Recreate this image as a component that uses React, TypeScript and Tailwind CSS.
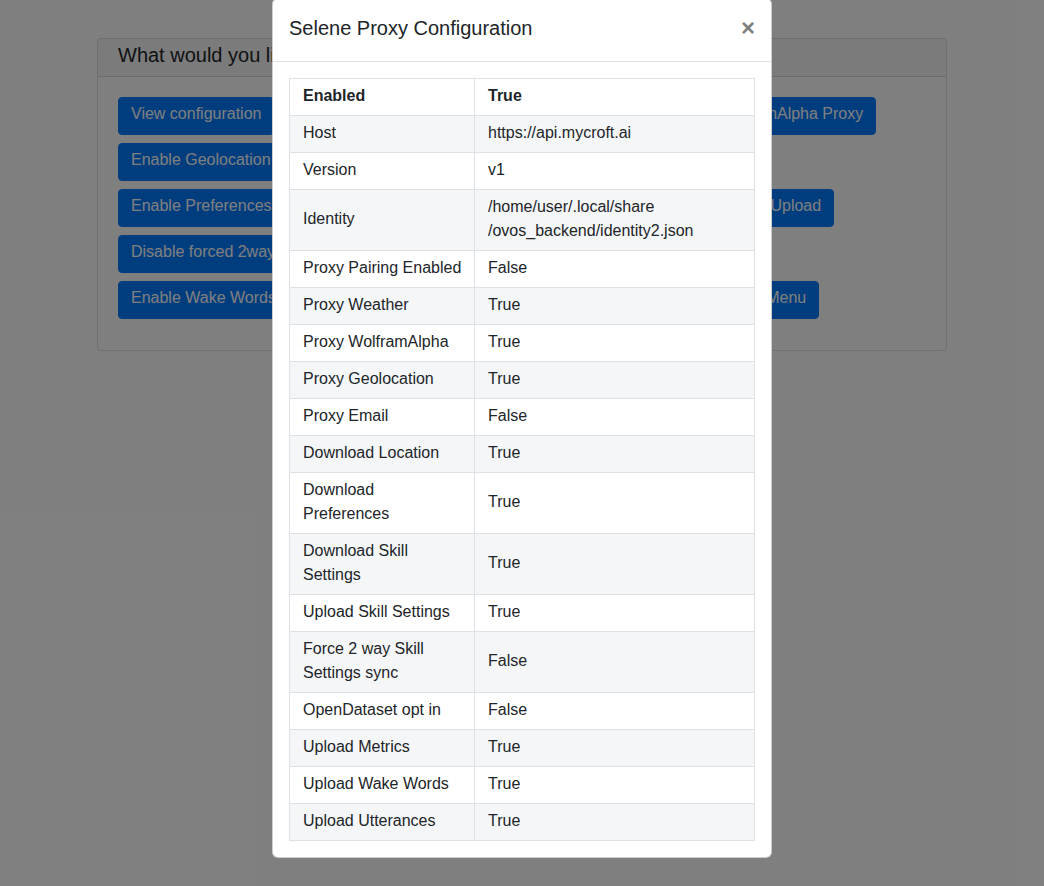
import React from "react";

const font = "[font-family:'Liberation_Sans',Arial,sans-serif]";

const btnClass =
  "h-[38px] shrink-0 whitespace-nowrap rounded border border-[#007bff] bg-[#007bff] px-3 pb-1 text-base leading-6 text-white";

const cellClass = "border border-[#dee2e6] pb-[7px] pl-[13px] pr-3 pt-[5px] align-middle leading-6";

interface ButtonRow {
  labels: string[];
  widths: (string | null)[];
}

const buttonRows: ButtonRow[] = [
  {
    labels: ["View configuration", "Enable Weather Proxy", "Enable WolframAlpha Proxy"],
    widths: [null, "w-[360px]", null],
  },
  {
    labels: ["Enable Geolocation Proxy", "Enable Email Proxy"],
    widths: [null, "w-[200px]"],
  },
  {
    labels: ["Enable Preferences Download", "Disable Location Download", "Enable Skill Settings Upload"],
    widths: [null, "w-[231px]", null],
  },
  {
    labels: ["Disable forced 2way Skill Settings sync", "Enable OpenDataset"],
    widths: [null, null],
  },
  {
    labels: ["Enable Wake Words Upload", "Enable Utterances Upload", "Main Menu"],
    widths: [null, "w-[354px]", null],
  },
];

const configRows: [string, React.ReactNode][] = [
  ["Host", "https://api.mycroft.ai"],
  ["Version", "v1"],
  [
    "Identity",
    <>
      /home/user/.local/share
      <wbr />
      /ovos_backend/identity2.json
    </>,
  ],
  ["Proxy Pairing Enabled", "False"],
  ["Proxy Weather", "True"],
  ["Proxy WolframAlpha", "True"],
  ["Proxy Geolocation", "True"],
  ["Proxy Email", "False"],
  ["Download Location", "True"],
  ["Download Preferences", "True"],
  ["Download Skill Settings", "True"],
  ["Upload Skill Settings", "True"],
  ["Force 2 way Skill Settings sync", "False"],
  ["OpenDataset opt in", "False"],
  ["Upload Metrics", "True"],
  ["Upload Wake Words", "True"],
  ["Upload Utterances", "True"],
];

function MenuCard() {
  return (
    <div className="mx-auto mt-[38px] w-[850px] rounded border border-black/[.125] bg-white">
      <div className="flex h-[38px] items-center border-b border-black/[.125] bg-black/[.03] px-5 pb-[6px] text-xl text-[#212529]">
        What would you like to do?
      </div>
      <div className="px-5 pb-[23px] pt-5">
        {buttonRows.map((row, i) => (
          <div key={i} className="mb-2 flex gap-2">
            {row.labels.map((label, j) => (
              <button key={label} type="button" className={`${btnClass} ${row.widths[j] ?? ""}`}>
                {label}
              </button>
            ))}
          </div>
        ))}
      </div>
    </div>
  );
}

function ConfigModal() {
  return (
    <div className="absolute left-1/2 top-[-2px] w-[500px] -translate-x-1/2 rounded-md border border-black/20 bg-white">
      <div className="flex items-start justify-between border-b border-[#dee2e6] px-4 pb-[18px] pt-[14px]">
        <h5 className="text-xl leading-[30px] text-[#212529]">Selene Proxy Configuration</h5>
        <button type="button" className="text-2xl font-bold leading-[30px] text-black opacity-50">
          ×
        </button>
      </div>
      <div className="p-4">
        <table className="w-full table-fixed border-collapse text-base text-[#212529]">
          <colgroup>
            <col className="w-[185px]" />
            <col />
          </colgroup>
          <thead>
            <tr>
              <th className={`${cellClass} text-left font-bold`}>Enabled</th>
              <th className={`${cellClass} text-left font-bold`}>True</th>
            </tr>
          </thead>
          <tbody>
            {configRows.map(([key, value], i) => (
              <tr key={key} className={i % 2 === 0 ? "bg-[#f5f6f8]" : "bg-white"}>
                <td className={cellClass}>{key}</td>
                <td className={cellClass}>{value}</td>
              </tr>
            ))}
          </tbody>
        </table>
      </div>
    </div>
  );
}

export default function App() {
  return (
    <div className={`relative h-[886px] overflow-hidden bg-white ${font}`}>
      <MenuCard />
      <div className="absolute inset-0 bg-black/50" />
      <ConfigModal />
    </div>
  );
}
